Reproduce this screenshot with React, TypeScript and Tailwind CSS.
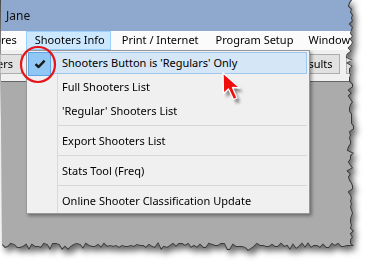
import React from "react";

// deterministic jitter so the torn edge is the same every render
function rng(seed: number) {
  let s = seed;
  return () => {
    s = (s * 16807) % 2147483647;
    return (s - 1) / 2147483646;
  };
}

function tornEdge(): [number, number][] {
  const r = rng(11);
  const pts: [number, number][] = [];
  for (let y = 0; y <= 246; y += 3) {
    const big = r() > 0.85 ? 3 : 0;
    pts.push([350 + Math.round(r() * 4) - big, y]);
  }
  for (let x = 350; x >= 0; x -= 3) {
    const big = r() > 0.85 ? 3 : 0;
    pts.push([x, 244 + Math.round(r() * 4) + big]);
  }
  return pts;
}

const EDGE = tornEdge();
const CLIP = `polygon(0px 0px, ${EDGE.map(([x, y]) => `${x}px ${y}px`).join(", ")})`;

const MENU_ITEMS: ({ label: string; checked?: boolean } | "sep")[] = [
  { label: "Shooters Button is 'Regulars' Only", checked: true },
  { label: "Full Shooters List" },
  { label: "'Regular' Shooters List" },
  "sep",
  { label: "Export Shooters List" },
  "sep",
  { label: "Stats Tool (Freq)" },
  "sep",
  { label: "Online Shooter Classification Update" },
];

function CheckMark() {
  return (
    <svg width="12" height="10" viewBox="0 0 12 10">
      <path d="M1.5 5.2 L4.6 8 L10.6 1.6" fill="none" stroke="#1b1b1b" strokeWidth="2.4" strokeLinejoin="round" />
    </svg>
  );
}

function ShootersMenu() {
  return (
    <div className="absolute left-[26px] top-[50px] w-[284px] border border-[#979797] bg-[#f0f0f0] shadow-[2px_2px_3px_rgba(0,0,0,0.35)]">
      <div className="relative">
        <div className="absolute left-[30px] top-0 bottom-0 w-px bg-[#d9d9d9]" />
        {MENU_ITEMS.map((item, i) =>
          item === "sep" ? (
            <div key={i} className="relative h-[6px] pt-[2px] pl-[31px] pr-[2px]">
              <div className="h-px bg-[#d7d7d7]" />
            </div>
          ) : (
            <div key={i} className="relative h-[24px] py-[1px] pl-[1px] pr-[2px]">
              <div
                className={`relative flex h-full items-center border pl-[33px] text-[11px] text-black ${
                  item.checked ? "border-[#9fc6ee] bg-[#d5e6f6]" : "border-transparent"
                }`}
              >
                {item.checked && (
                  <div className="absolute -left-px -top-px flex h-[24px] w-[23px] items-center justify-center border border-[#5fa3e6] bg-[#91c7f4]">
                    <CheckMark />
                  </div>
                )}
                {item.label}
              </div>
            </div>
          )
        )}
      </div>
    </div>
  );
}

function RedCursor() {
  const pts = "0,0 0.5,20.5 5.5,16 10.5,26.5 14,25 9.5,14.5 17,15";
  return (
    <svg className="absolute left-[215px] top-[68px]" width="40" height="44" viewBox="0 0 40 44">
      <defs>
        <filter id="cursorBlur" x="-50%" y="-50%" width="200%" height="200%">
          <feGaussianBlur stdDeviation="1.6" />
        </filter>
      </defs>
      <g transform="translate(8,5)">
        <polygon points={pts} transform="translate(3,4)" fill="rgba(0,0,0,0.45)" filter="url(#cursorBlur)" />
        <polygon points={pts} fill="#f20d0d" stroke="#ffffff" strokeWidth="1.3" strokeLinejoin="round" />
      </g>
    </svg>
  );
}

export default function App() {
  return (
    <div className="h-[268px] w-[372px] overflow-hidden bg-white font-['Noto_Sans',sans-serif]">
      <div className="drop-shadow-[3px_4px_3px_rgba(0,0,0,0.6)]">
        <div className="relative h-[254px] w-[358px] overflow-hidden" style={{ clipPath: CLIP }}>
          <div className="flex h-full flex-col border-l border-[#4a4a4a]">
            {/* title bar */}
            <div className="flex h-[31px] items-center bg-[#8ea9cd] pl-[5px] text-[12px] text-[#111]">Jane</div>

            {/* menu bar */}
            <div className="flex h-[19px] items-stretch bg-[#fbfbfb] text-[11px] text-black whitespace-nowrap">
              <div className="-ml-[26px] flex items-center px-[8px]">Scores</div>
              <div className="ml-[1px] flex items-center border border-[#99d1ff] bg-[#cce8ff] pl-[8px] pr-[5px]">Shooters Info</div>
              <div className="flex items-center pl-[11px] pr-[8px]">Print / Internet</div>
              <div className="flex items-center pl-[9px] pr-[8px]">Program Setup</div>
              <div className="flex items-center pl-[7px]">Window</div>
            </div>

            {/* toolbar */}
            <div className="flex h-[32px] items-start border-b border-[#666] bg-[#f0f0f0] pt-[4px] text-[11px] text-black whitespace-nowrap">
              <div className="-ml-[43px] flex h-[20px] w-[64px] shrink-0 items-center justify-center border border-[#adadad] bg-[#e1e1e1]">Shooters</div>
              <div className="ml-auto flex h-[20px] w-[52px] shrink-0 items-center justify-center border border-[#adadad] bg-[#e1e1e1]">Results</div>
              <div className="-mr-[48px] ml-[6px] flex h-[20px] w-[60px] shrink-0 items-center justify-center border border-[#adadad] bg-[#e1e1e1]">Scores</div>
            </div>

            {/* workspace */}
            <div className="flex-1 bg-[#ababab]" />
          </div>

          <ShootersMenu />

          <svg className="absolute left-0 top-0" width="80" height="90" viewBox="0 0 80 90">
            <ellipse cx="38" cy="64.5" rx="17" ry="17.5" fill="none" stroke="#e4161c" strokeWidth="2.2" />
          </svg>

          <RedCursor />

          <svg className="pointer-events-none absolute left-0 top-0" width="358" height="254" viewBox="0 0 358 254">
            <polyline points={EDGE.map(([x, y]) => `${x},${y}`).join(" ")} fill="none" stroke="#3a3a3a" strokeWidth="2" />
          </svg>
        </div>
      </div>
    </div>
  );
}
